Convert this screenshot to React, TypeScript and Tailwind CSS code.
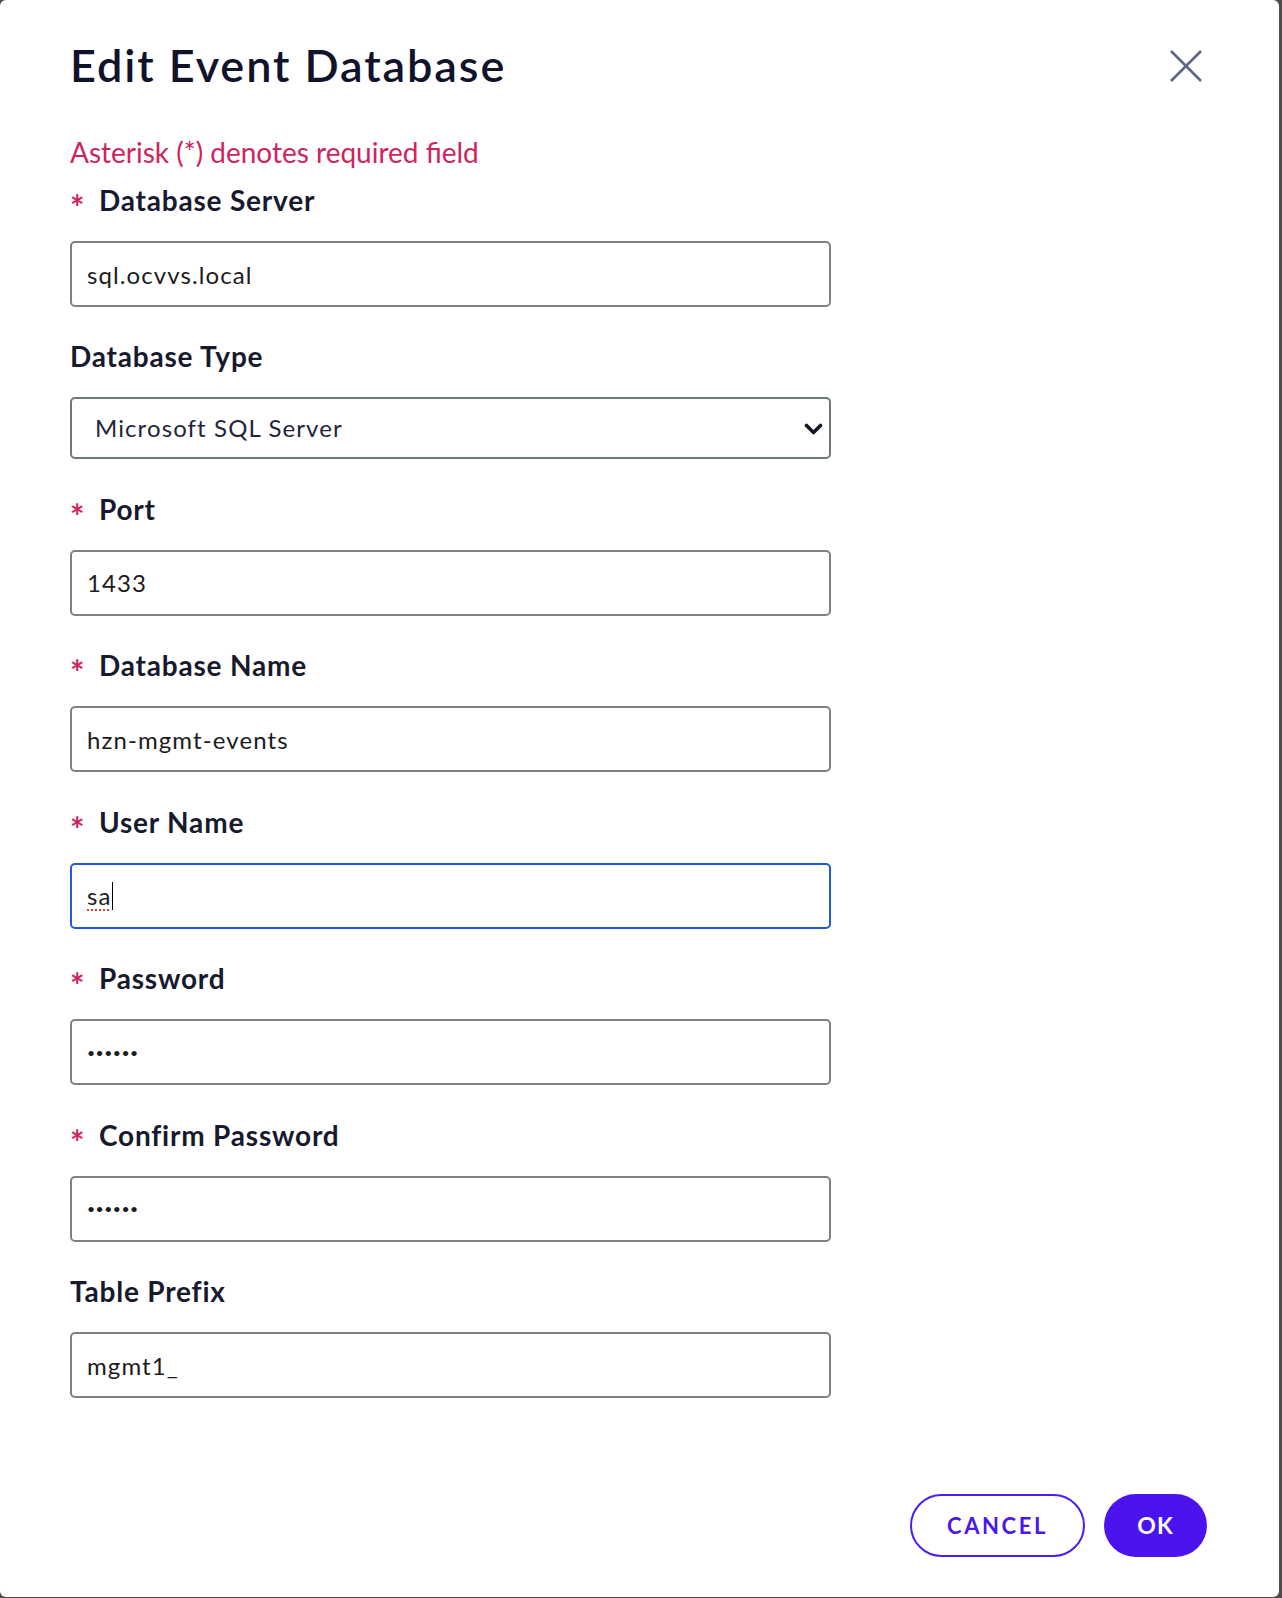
import { useState } from "react";

const font = { fontFamily: "Lato, 'Noto Sans', sans-serif" };

function Req() {
  return (
    <span className="inline-block w-[29px] text-[34px] leading-none font-bold text-[#d0245f] align-[-9px] tracking-normal">
      *
    </span>
  );
}

function Label({ text, required }: { text: string; required?: boolean }) {
  return (
    <div className="h-[32px] text-[28px] leading-[32px] font-bold text-[#171a2e] tracking-[0.8px]">
      {required && <Req />}
      {text}
    </div>
  );
}

function TextField({
  label,
  value,
  required,
  type = "text",
}: {
  label: string;
  value: string;
  required?: boolean;
  type?: string;
}) {
  const [val, setVal] = useState(value);
  const isPassword = type === "password";
  return (
    <div className="mt-[33.5px]">
      <Label text={label} required={required} />
      <input
        type={type}
        value={val}
        onChange={(e) => setVal(e.target.value)}
        className={
          isPassword
            ? "mt-[25px] block h-[66px] w-[761px] rounded-[5px] border-2 border-[#808080] bg-white px-[15px] text-[14px] tracking-[0.5px] text-[#1c1c1c] outline-none"
            : "mt-[25px] block h-[66px] w-[761px] rounded-[5px] border-2 border-[#808080] bg-white px-[15px] text-[24px] tracking-[1.1px] text-[#1c1c1c] outline-none"
        }
        style={font}
      />
    </div>
  );
}

export default function App() {
  return (
    <div className="h-[1598px] w-[1282px] bg-[#4d4d4d]" style={font}>
      <div className="relative h-[1597px] w-[1279px] rounded-[6px] bg-white">
        <div className="pl-[70px] pr-[72px] pt-[39px]">
          {/* Header */}
          <div className="flex items-start justify-between">
            <h1 className="text-[45px] leading-[52px] font-semibold text-[#11132b] tracking-[1.9px]">
              Edit Event Database
            </h1>
            <button aria-label="Close" className="mt-[11px] mr-[5px] text-[#5d6784]">
              <svg width="32" height="32" viewBox="0 0 32 32" fill="none" stroke="currentColor" strokeWidth="2.6">
                <path d="M1 1 31 31M31 1 1 31" />
              </svg>
            </button>
          </div>

          <p className="mt-[44px] text-[28px] leading-[34px] text-[#d0245f]">Asterisk (*) denotes required field</p>

          <div className="-mt-[18.5px]">
            <TextField label="Database Server" value="sql.ocvvs.local" required />
          </div>

          {/* Database type */}
          <div className="mt-[33px]">
            <Label text="Database Type" />
            <div className="relative mt-[25px] w-[761px]">
              <select
                defaultValue="mssql"
                className="block h-[62px] w-full appearance-none rounded-[5px] border-2 border-[#6f7878] bg-white pl-[23px] text-[24px] tracking-[1.1px] text-[#23253a] outline-none"
                style={font}
              >
                <option value="mssql">Microsoft SQL Server</option>
                <option value="oracle">Oracle</option>
                <option value="postgres">PostgreSQL</option>
              </select>
              <svg
                className="pointer-events-none absolute right-[8px] top-[26px]"
                width="19"
                height="12"
                viewBox="0 0 19 12"
                fill="none"
                stroke="#151728"
                strokeWidth="3.6"
                strokeLinecap="round"
                strokeLinejoin="round"
              >
                <path d="M2.5 2.5 9.5 9.5 16.5 2.5" />
              </svg>
            </div>
          </div>

          <TextField label="Port" value="1433" required />
          <TextField label="Database Name" value="hzn-mgmt-events" required />

          {/* Focused user name field */}
          <div className="mt-[33.5px]">
            <Label text="User Name" required />
            <div className="mt-[25px] flex h-[66px] w-[761px] items-center rounded-[5px] border-2 border-[#1f5bd8] bg-white px-[15px] text-[24px] tracking-[1.1px] text-[#1c1c1c]">
              <span className="underline decoration-dotted decoration-[#e53935] decoration-2 underline-offset-[5px]">sa</span>
              <span className="h-[28px] w-[1.5px] bg-black" />
            </div>
          </div>

          <TextField label="Password" value="secret" type="password" required />
          <TextField label="Confirm Password" value="secret" type="password" required />
          <TextField label="Table Prefix" value="mgmt1_" />

          {/* Footer */}
          <div className="mt-[96px] flex justify-end gap-[19px]">
            <button className="h-[63px] w-[175px] rounded-full border-2 border-[#4f1cf0] text-[22px] font-bold tracking-[2.6px] text-[#4a17ee]">
              CANCEL
            </button>
            <button className="h-[63px] w-[103px] rounded-full bg-[#4b14ef] text-[23px] font-bold tracking-[1px] text-white">
              OK
            </button>
          </div>
        </div>
      </div>
    </div>
  );
}
